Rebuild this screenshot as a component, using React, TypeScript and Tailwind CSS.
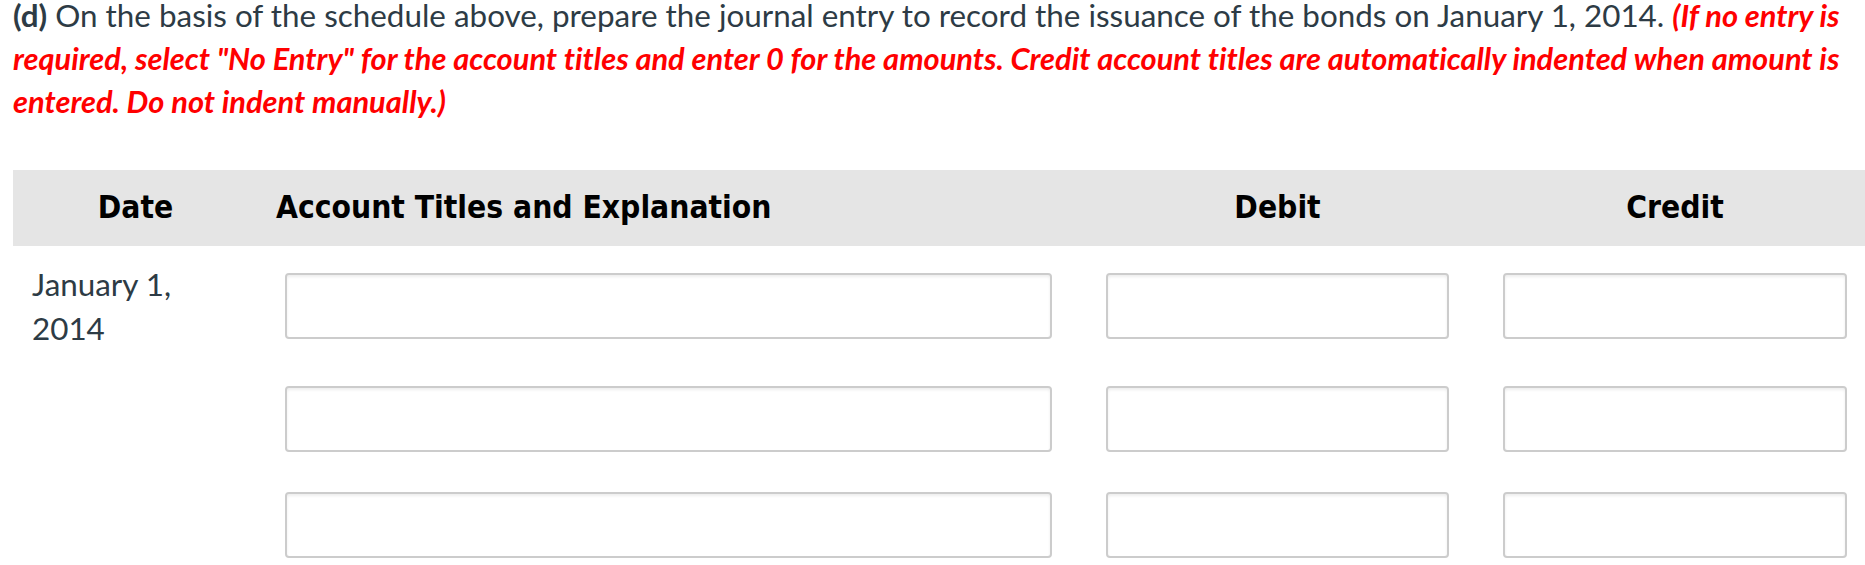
import React from 'react';

// Journal entry form: question text + table of empty entry rows
const rows = [
    { id: 1, date: ['January 1,', '2014'] },
    { id: 2, date: [] as string[] },
    { id: 3, date: [] as string[] },
];

const inputCls =
    'block w-full h-[66px] bg-white border-2 border-[#cccccc] rounded-[4px] shadow-[inset_0_2px_3px_rgba(0,0,0,0.07)] outline-none';

export default function App() {
    return (
        <div className="w-[1865px] h-[565px] overflow-hidden bg-white pl-[13px] font-['Lato',sans-serif] [font-variant-ligatures:none]">
            <p className="-mt-[6px] text-[31.4px] leading-[42px] text-[#2d3b45]">
                <strong className="font-bold">(d)</strong> On the basis of the schedule above, prepare the journal entry to record
                the issuance of the bonds on January 1, 2014.{' '}
                <em className="italic font-bold text-[30.8px] text-[#ff0000]">
                    (If no entry is required, select "No Entry" for the account titles and enter 0 for the amounts. Credit account
                    titles are automatically indented when amount is entered. Do not indent manually.)
                </em>
            </p>

            <div className="mt-[47px]">
                {/* header */}
                <div className="grid grid-cols-[245px_821px_397px_389px] h-[76px] items-center bg-[#e5e5e5] text-black font-['DejaVu_Sans_Condensed','DejaVu_Sans',sans-serif] font-bold text-[31.5px]">
                    <div className="text-center">Date</div>
                    <div className="pl-[18px]">Account Titles and Explanation</div>
                    <div className="text-center px-[27px]">Debit</div>
                    <div className="text-center pl-[27px] pr-[18px]">Credit</div>
                </div>

                {/* entry rows */}
                {rows.map((row) => (
                    <div
                        key={row.id}
                        className={`grid grid-cols-[245px_821px_397px_389px] items-center ${row.id === 1 ? 'py-[16px]' : 'py-[20px]'}`}
                    >
                        <div className="pl-[19px] text-[31.4px] leading-[44px] text-[#2d3b45]">
                            {row.date.map((line) => (
                                <div key={line}>{line}</div>
                            ))}
                        </div>
                        <div className="px-[27px]">
                            <input type="text" className={inputCls} />
                        </div>
                        <div className="px-[27px]">
                            <input type="text" className={inputCls} />
                        </div>
                        <div className="pl-[27px] pr-[18px]">
                            <input type="text" className={inputCls} />
                        </div>
                    </div>
                ))}
            </div>
        </div>
    );
}
